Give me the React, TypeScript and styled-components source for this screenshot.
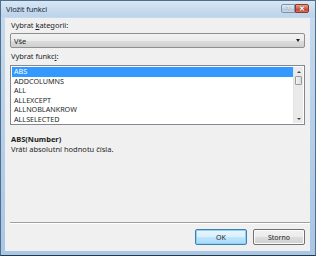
import React from "react";
import styled, { createGlobalStyle } from "styled-components";

const Global = createGlobalStyle`
  html, body { margin: 0; padding: 0; background: #fff; }
  body { font-family: "Noto Sans", "Open Sans", sans-serif; }
`;

const Window = styled.div`
  width: 316px;
  height: 256px;
  box-sizing: border-box;
  display: flex;
  flex-direction: column;
  background: linear-gradient(to bottom, #c7dbef 0%, #b9d1ea 40%, #a9c6e4 100%);
  border: 1px solid #4f6f8f;
  border-bottom-color: #1e3a4e;
  overflow: hidden;
`;

const TitleBar = styled.div`
  height: 16px;
  display: flex;
  align-items: flex-start;
  padding: 0 6px 0 5px;
  background: linear-gradient(to bottom, #d8e6f4 0%, #c6daee 60%, #bdd3ea 100%);
`;

const Title = styled.div`
  flex: 1;
  font-size: 7.5px;
  line-height: 16px;
  color: #1b2a3a;
  letter-spacing: -0.1px;
`;

const CapBtn = styled.div<{ $close?: boolean }>`
  width: 14px;
  height: 9px;
  margin-top: 3px;
  box-sizing: border-box;
  display: flex;
  align-items: center;
  justify-content: center;
  font-size: 7px;
  font-weight: bold;
  color: #fff;
  border: 1px solid ${(p) => (p.$close ? "#8a3a30" : "#7e94ad")};
  border-radius: ${(p) => (p.$close ? "0 2px 2px 0" : "2px 0 0 2px")};
  background: ${(p) =>
    p.$close
      ? "linear-gradient(to bottom, #e8a08e 0%, #d0614b 50%, #c23b22 55%, #d8745a 100%)"
      : "linear-gradient(to bottom, #e3ecf6 0%, #c4d4e6 50%, #b2c6de 55%, #c9d8ea 100%)"};
  text-shadow: 0 0 1px #444;
`;

const Client = styled.div`
  flex: 1;
  margin: 1px 5px 4px 4px;
  background: #f0f0f0;
  display: flex;
  flex-direction: column;
  padding: 0 5px 0 5px;
  font-size: 7.5px;
  color: #1e1e1e;
`;

const Label = styled.div<{ $top: number }>`
  margin-top: ${(p) => p.$top}px;
  margin-left: 1px;
  height: 11px;
  line-height: 11px;
  letter-spacing: -0.05px;
`;

const Combo = styled.div`
  margin-top: 2px;
  height: 15px;
  box-sizing: border-box;
  border: 1px solid #8e8f8f;
  border-radius: 2px;
  background: linear-gradient(to bottom, #f2f2f2 0%, #ebebeb 50%, #dddddd 51%, #cfcfcf 100%);
  display: flex;
  align-items: center;
  padding: 0 4px 0 3px;
`;

const ComboText = styled.div`
  flex: 1;
`;

const Arrow = styled.div`
  width: 0;
  height: 0;
  border-left: 2.5px solid transparent;
  border-right: 2.5px solid transparent;
  border-top: 3px solid #222;
`;

const ListBox = styled.div`
  margin-top: 3px;
  height: 60px;
  box-sizing: border-box;
  border: 1px solid #828790;
  background: #fff;
  display: flex;
  padding: 1px;
`;

const Items = styled.div`
  flex: 1;
  display: flex;
  flex-direction: column;
`;

const Item = styled.div<{ $sel?: boolean }>`
  height: 9.6px;
  line-height: 9.6px;
  padding-left: 2px;
  font-size: 7.2px;
  background: ${(p) => (p.$sel ? "#3399ff" : "transparent")};
  color: ${(p) => (p.$sel ? "#fff" : "#1e1e1e")};
`;

const ScrollBar = styled.div`
  width: 9px;
  display: flex;
  flex-direction: column;
  background: #eaeaea;
  border-left: 1px solid #e3e3e3;
`;

const ScrollArrow = styled.div<{ $down?: boolean }>`
  height: 9px;
  display: flex;
  align-items: center;
  justify-content: center;
  &::after {
    content: "";
    border-left: 2px solid transparent;
    border-right: 2px solid transparent;
    ${(p) =>
      p.$down ? "border-top: 2px solid #444;" : "border-bottom: 2px solid #444;"}
  }
`;

const Thumb = styled.div`
  height: 9px;
  margin: 0 1px;
  box-sizing: border-box;
  border: 1px solid #9a9a9a;
  border-radius: 1px;
  background: linear-gradient(to right, #f4f4f4, #dcdcdc);
`;

const Track = styled.div`
  flex: 1;
`;

const DescTitle = styled.div`
  margin-top: 9px;
  margin-left: 1px;
  font-weight: bold;
  height: 10px;
  line-height: 10px;
`;

const Desc = styled.div`
  margin-left: 1px;
  height: 10px;
  line-height: 10px;
`;

const Spacer = styled.div`
  flex: 1;
`;

const Separator = styled.div`
  height: 1px;
  background: #a0a0a0;
  border-bottom: 1px solid #fff;
  margin-right: -5px;
`;

const Footer = styled.div`
  display: flex;
  justify-content: flex-end;
  gap: 6px;
  padding: 5px 0 6px 0;
`;

const Button = styled.div<{ $def?: boolean }>`
  width: 52px;
  height: 16px;
  box-sizing: border-box;
  border: 1px solid ${(p) => (p.$def ? "#3c7fb1" : "#707070")};
  border-radius: 2px;
  background: ${(p) =>
    p.$def
      ? "linear-gradient(to bottom, #eaf6fd 0%, #d9f0fc 50%, #bee6fd 51%, #a7d9f5 100%)"
      : "linear-gradient(to bottom, #f2f2f2 0%, #ebebeb 50%, #dddddd 51%, #cfcfcf 100%)"};
  display: flex;
  align-items: center;
  justify-content: center;
  font-size: 7px;
  color: #1e1e1e;
  box-shadow: ${(p) => (p.$def ? "inset 0 0 0 1px #8fd0f3" : "inset 0 0 0 1px #fcfcfc")};
`;

const items = ["ABS", "ADDCOLUMNS", "ALL", "ALLEXCEPT", "ALLNOBLANKROW", "ALLSELECTED"];

export default function App() {
  return (
    <>
      <Global />
      <Window>
        <TitleBar>
          <Title>Vložit funkci</Title>
          <CapBtn>?</CapBtn>
          <CapBtn $close>✕</CapBtn>
        </TitleBar>
        <Client>
          <Label $top={2}>
            Vybrat <u>k</u>ategorii:
          </Label>
          <Combo>
            <ComboText>Vše</ComboText>
            <Arrow />
          </Combo>
          <Label $top={3}>
            Vybrat funkc<u>i</u>:
          </Label>
          <ListBox>
            <Items>
              {items.map((it, i) => (
                <Item key={it} $sel={i === 0}>
                  {it}
                </Item>
              ))}
            </Items>
            <ScrollBar>
              <ScrollArrow />
              <Thumb />
              <Track />
              <ScrollArrow $down />
            </ScrollBar>
          </ListBox>
          <DescTitle>ABS(Number)</DescTitle>
          <Desc>Vrátí absolutní hodnotu čísla.</Desc>
          <Spacer />
          <Separator />
          <Footer>
            <Button $def>OK</Button>
            <Button>Storno</Button>
          </Footer>
        </Client>
      </Window>
    </>
  );
}
